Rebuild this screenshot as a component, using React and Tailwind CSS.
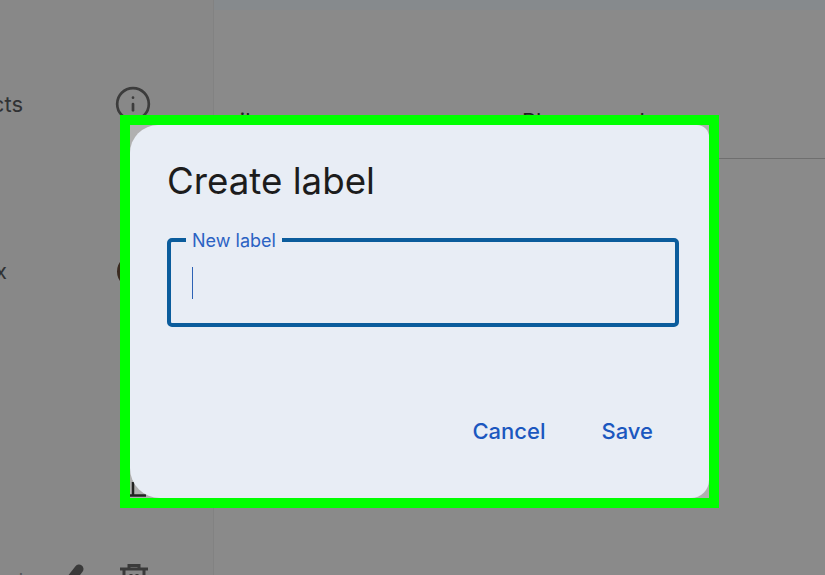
import { Info } from 'lucide-react';

const sans = "font-['Inter','Noto_Sans',sans-serif]";

const SideRow = ({ text, textWidth, children }) => (
  <div className="flex items-center justify-between w-[150px] h-[32px]">
    <div className="flex justify-end overflow-hidden" style={{ width: textWidth }}>
      <span className="text-[22px] text-[#303234] whitespace-nowrap">{text}</span>
    </div>
    {children}
  </div>
);

const App = () => {
  return (
    <div className={`relative flex w-[825px] h-[575px] overflow-hidden bg-[#8a8a8a] ${sans}`}>
      {/* sidebar, dimmed by the overlay */}
      <aside className="flex flex-col w-[214px] shrink-0 pt-[88px] bg-[#888888] border-r border-[#828282]">
        <SideRow text="Contacts" textWidth={23}>
          <Info size={38} strokeWidth={1.7} className="text-[#3c3c3c] -mr-[2px]" />
        </SideRow>
        <div className="mt-[135px]">
          <SideRow text="Inbox" textWidth={7}>
            <div className="w-[33px] h-[33px] rounded-full border-[3px] border-[#3a2a20]" />
          </SideRow>
        </div>
        <div className="flex items-start mt-[276px] gap-[32px]">
          <div className="flex justify-end w-[34px] pt-[6px] overflow-hidden">
            <span className="text-[20px] leading-[24px] text-[#55575a] whitespace-nowrap">Labels</span>
          </div>
          <svg width="18" height="20" viewBox="0 0 18 20" className="shrink-0 mt-[1px]">
            <path d="M13 5L2 19" stroke="#3a3a3a" strokeWidth="9" strokeLinecap="round" />
          </svg>
          <svg width="28" height="24" viewBox="0 0 28 24" fill="none" stroke="#3a3a3a" strokeWidth="3" className="shrink-0 ml-[4px] mt-[1px]">
            <path d="M0 5h28M9 5V1.5h10V5M4 5v19h20V5M11 10v14M17 10v14" />
          </svg>
        </div>
      </aside>

      {/* table behind the dialog */}
      <main className="flex flex-col flex-1 overflow-hidden">
        <div className="h-[10px] bg-[#868a8d]" />
        <div className="flex items-center h-[149px] pt-[75px] border-b border-[#6f6f6f] text-[22px] text-[#1f1f1f]">
          <span className="w-[308px] shrink-0 -ml-[19px]">Email</span>
          <span className="whitespace-nowrap ml-[19px]">Phone number</span>
        </div>
      </main>

      {/* dialog, with the highlight frame round it */}
      <div className="absolute left-[120px] top-[115px] w-[599px] h-[393px] border-[10px] border-[#00ff00] bg-[#b0b0b0]">
        <svg width="18" height="18" viewBox="0 0 18 18" className="absolute left-0 bottom-0">
          <path d="M3 2v14M0 15.5h16" stroke="#222" strokeWidth="2.5" fill="none" />
        </svg>
        <div className="relative flex flex-col h-full pl-[37px] pr-[30px] pt-[34px] bg-[#e8edf5] rounded-tl-[28px] rounded-bl-[30px] rounded-tr-[12px] rounded-br-[18px]">
          <h2 className="text-[36.7px] leading-[44px] text-[#1c1c1c]">Create label</h2>
          <div className="relative mt-[35px] h-[89px] border-[4px] border-[#0b5c9c] rounded-[5px] pl-[21px] pt-[25px]">
            <span className="absolute left-[15px] -top-[11px] px-[6px] bg-[#e8edf5] text-[18px] leading-[20px] text-[#2b62c3]">New label</span>
            <div className="w-px h-[32px] bg-[#2d62b5]" />
          </div>
          <div className="flex justify-end gap-[56px] mt-[90px] pr-[26px] text-[22px] leading-[28px] font-medium text-[#1b57bf]">
            <button>Cancel</button>
            <button>Save</button>
          </div>
        </div>
      </div>
    </div>
  );
};

export default App;
